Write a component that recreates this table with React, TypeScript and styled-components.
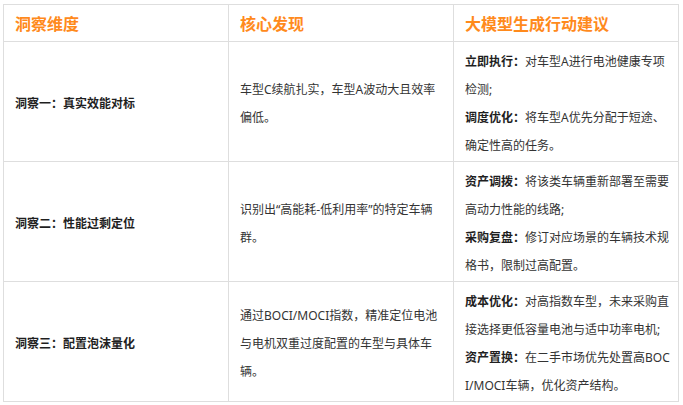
import styled, { createGlobalStyle } from "styled-components";

interface Advice {
  label: string;
  text: string;
}

interface Insight {
  title: string;
  finding: string;
  advice: Advice[];
}

const insights: Insight[] = [
  {
    title: "洞察一：真实效能对标",
    finding: "车型C续航扎实，车型A波动大且效率偏低。",
    advice: [
      { label: "立即执行：", text: "对车型A进行电池健康专项检测;" },
      { label: "调度优化：", text: "将车型A优先分配于短途、确定性高的任务。" },
    ],
  },
  {
    title: "洞察二：性能过剩定位",
    finding: "识别出“高能耗-低利用率”的特定车辆群。",
    advice: [
      { label: "资产调拨：", text: "将该类车辆重新部署至需要高动力性能的线路;" },
      { label: "采购复盘：", text: "修订对应场景的车辆技术规格书，限制过高配置。" },
    ],
  },
  {
    title: "洞察三：配置泡沫量化",
    finding: "通过BOCI/MOCI指数，精准定位电池与电机双重过度配置的车型与具体车辆。",
    advice: [
      { label: "成本优化：", text: "对高指数车型，未来采购直接选择更低容量电池与适中功率电机;" },
      { label: "资产置换：", text: "在二手市场优先处置高BOCI/MOCI车辆，优化资产结构。" },
    ],
  },
];

export default function App() {
  return (
    <>
      <GlobalStyle />
      <Table>
        <colgroup>
          <col style={{ width: 225 }} />
          <col style={{ width: 225 }} />
          <col style={{ width: 225 }} />
        </colgroup>
        <thead>
          <tr>
            <HeadCell>洞察维度</HeadCell>
            <HeadCell>核心发现</HeadCell>
            <HeadCell>大模型生成行动建议</HeadCell>
          </tr>
        </thead>
        <tbody>
          {insights.map((row) => (
            <BodyRow key={row.title}>
              <TitleCell>{row.title}</TitleCell>
              <Cell>{row.finding}</Cell>
              <Cell $breakAll>
                {row.advice.map((a) => (
                  <Advice key={a.label}>
                    <Label>{a.label}</Label>
                    {a.text}
                  </Advice>
                ))}
              </Cell>
            </BodyRow>
          ))}
        </tbody>
      </Table>
    </>
  );
}

const GlobalStyle = createGlobalStyle`
  html, body {
    margin: 0;
    background: #ffffff;
  }
  body {
    font-family: "Noto Sans", "Noto Sans CJK SC", sans-serif;
    color: #333333;
  }
`;

const Table = styled.table`
  margin: 4px 0 0 3px;
  width: 675px;
  table-layout: fixed;
  border-collapse: collapse;
  border: 1px solid #dedede;
`;

const HeadCell = styled.th`
  height: 36px;
  padding: 0 11px;
  border: 1px solid #dedede;
  text-align: left;
  font-size: 16px;
  font-weight: 700;
  color: #ff8a1c;
  vertical-align: middle;
`;

const BodyRow = styled.tr`
  height: 119px;
`;

const Cell = styled.td<{ $breakAll?: boolean }>`
  padding: 6px 8px 1px 11px;
  border: 1px solid #dedede;
  font-size: 12px;
  line-height: 28px;
  color: #333333;
  vertical-align: middle;
  word-break: ${(p) => (p.$breakAll ? "break-all" : "normal")};
`;

const TitleCell = styled(Cell)`
  font-weight: 700;
  color: #1f1f1f;
`;

const Advice = styled.div``;

const Label = styled.b`
  font-weight: 700;
  color: #1f1f1f;
`;
